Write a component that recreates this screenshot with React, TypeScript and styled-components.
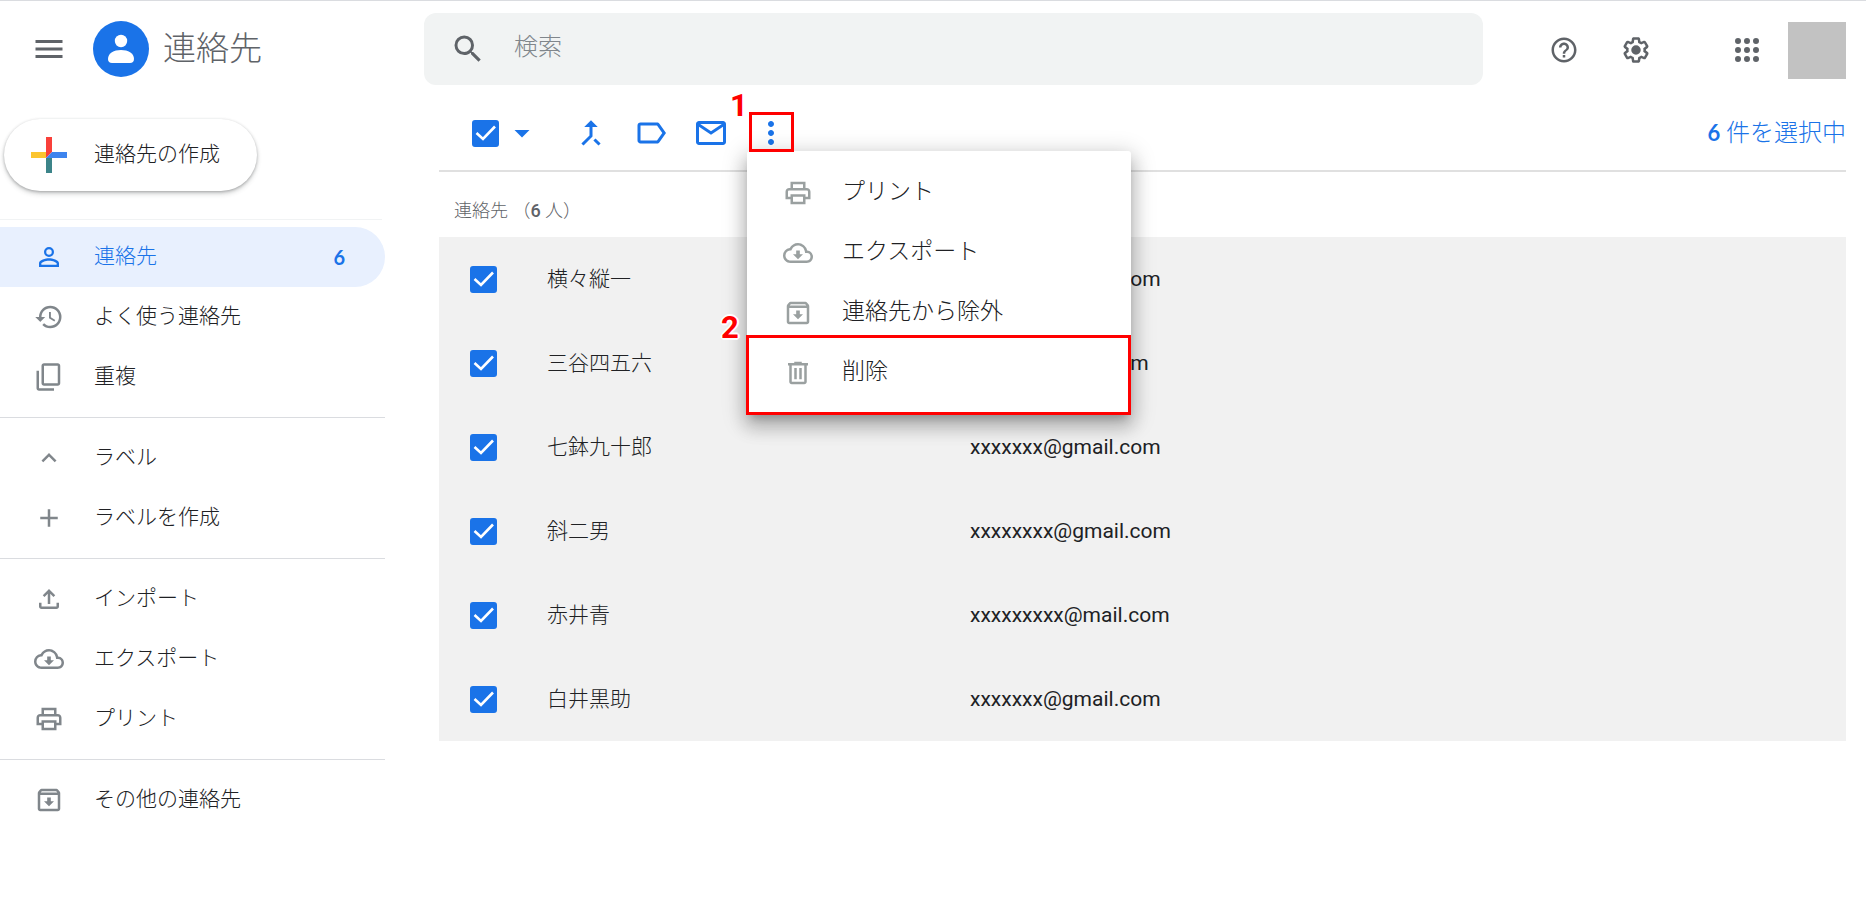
import React from 'react';
import styled, { createGlobalStyle } from 'styled-components';

const BLUE = '#1a73e8';
const GREY = '#5f6368';
const RED = '#ff0000';
const JP = "'Noto Sans CJK JP', sans-serif";

const GlobalStyle = createGlobalStyle`
  *, *::before, *::after { box-sizing: border-box; }
  body {
    margin: 0;
    background: #fff;
    color: #202124;
    font-family: Roboto, ${JP};
    font-size: 21px;
    font-weight: 300;
    line-height: 30px;
  }
  button, input { font: inherit; color: inherit; }
  button { border: 0; padding: 0; background: none; cursor: pointer; }
  ul { list-style: none; margin: 0; padding: 0; }
  a { color: inherit; text-decoration: none; }
`;

const PATHS = {
  menu: 'M3 18h18v-2H3v2zm0-5h18v-2H3v2zm0-7v2h18V6H3z',
  search:
    'M15.5 14h-.79l-.28-.27A6.471 6.471 0 0 0 16 9.5 6.5 6.5 0 1 0 9.5 16c1.61 0 3.09-.59 4.23-1.57l.27.28v.79l5 4.99L20.49 19l-4.99-5zm-6 0C7.01 14 5 11.99 5 9.5S7.01 5 9.5 5 14 7.01 14 9.5 11.99 14 9.5 14z',
  help:
    'M11 18h2v-2h-2v2zm1-16C6.48 2 2 6.48 2 12s4.48 10 10 10 10-4.48 10-10S17.52 2 12 2zm0 18c-4.41 0-8-3.59-8-8s3.59-8 8-8 8 3.59 8 8-3.59 8-8 8zm0-14c-2.21 0-4 1.79-4 4h2c0-1.1.9-2 2-2s2 .9 2 2c0 2-3 1.75-3 5h2c0-2.25 3-2.5 3-5 0-2.21-1.79-4-4-4z',
  settings:
    'M13.85 22.25h-3.7c-.74 0-1.36-.54-1.45-1.27l-.27-1.89c-.27-.14-.53-.29-.79-.46l-1.8.72c-.7.26-1.47-.03-1.81-.65L2.2 15.53c-.35-.66-.2-1.44.36-1.88l1.53-1.19c-.01-.15-.02-.3-.02-.46 0-.15.01-.31.02-.46l-1.52-1.19c-.59-.45-.74-1.26-.37-1.88l1.85-3.19c.34-.62 1.11-.9 1.79-.63l1.81.73c.26-.17.52-.32.78-.46l.27-1.91c.09-.7.71-1.25 1.44-1.25h3.7c.74 0 1.36.54 1.45 1.27l.27 1.89c.27.14.53.29.79.46l1.8-.72c.71-.26 1.48.03 1.82.65l1.84 3.18c.36.66.2 1.44-.36 1.88l-1.52 1.19c.01.15.02.3.02.46s-.01.31-.02.46l1.52 1.19c.56.45.72 1.23.37 1.86l-1.86 3.22c-.34.62-1.11.9-1.8.63l-1.8-.72c-.26.17-.52.32-.78.46l-.27 1.91c-.1.68-.72 1.22-1.46 1.22zm-3.23-2h2.76l.37-2.55.53-.22c.44-.18.88-.44 1.34-.78l.45-.34 2.38.96 1.38-2.4-2.03-1.58.07-.56c.03-.26.06-.51.06-.78s-.03-.53-.06-.78l-.07-.56 2.03-1.58-1.39-2.4-2.39.96-.45-.35c-.42-.32-.87-.58-1.33-.77l-.52-.22-.37-2.55h-2.76l-.37 2.55-.53.21c-.44.19-.88.44-1.34.79l-.45.33-2.38-.95-1.39 2.39 2.03 1.58-.07.56a7 7 0 0 0-.06.79c0 .26.02.53.06.78l.07.56-2.03 1.58 1.38 2.4 2.39-.96.45.35c.43.33.86.58 1.33.77l.53.22.38 2.55zM12 8.2a3.8 3.8 0 1 0 0 7.6 3.8 3.8 0 0 0 0-7.6z',
  apps:
    'M6 4a2 2 0 1 0 0 4 2 2 0 0 0 0-4zm6 0a2 2 0 1 0 0 4 2 2 0 0 0 0-4zm6 0a2 2 0 1 0 0 4 2 2 0 0 0 0-4zM6 10a2 2 0 1 0 0 4 2 2 0 0 0 0-4zm6 0a2 2 0 1 0 0 4 2 2 0 0 0 0-4zm6 0a2 2 0 1 0 0 4 2 2 0 0 0 0-4zM6 16a2 2 0 1 0 0 4 2 2 0 0 0 0-4zm6 0a2 2 0 1 0 0 4 2 2 0 0 0 0-4zm6 0a2 2 0 1 0 0 4 2 2 0 0 0 0-4z',
  person:
    'M12 4a4 4 0 1 0 0 8 4 4 0 0 0 0-8zm0 1.8a2.2 2.2 0 1 1 0 4.4 2.2 2.2 0 0 1 0-4.4zM12 13c-2.67 0-8 1.34-8 4v3h16v-3c0-2.66-5.33-4-8-4zm6.1 5.2H5.9V17c0-.64 3.13-2.1 6.1-2.1s6.1 1.46 6.1 2.1v1.2z',
  history:
    'M13 3a9 9 0 0 0-9 9H1l3.89 3.89.07.14L9 12H6c0-3.87 3.13-7 7-7s7 3.13 7 7-3.13 7-7 7c-1.93 0-3.68-.79-4.94-2.06l-1.42 1.42A8.954 8.954 0 0 0 13 21a9 9 0 0 0 0-18zm-1 5v5l4.28 2.54.72-1.21-3.5-2.08V8H12z',
  copy:
    'M16 23H4c-1.1 0-2-.9-2-2V7h2v14h12v2zm3-4H8c-1.1 0-2-.9-2-2V3c0-1.1.9-2 2-2h11c1.1 0 2 .9 2 2v14c0 1.1-.9 2-2 2zm0-16H8v14h11V3z',
  chevron: 'M12 8l-6 6 1.41 1.41L12 10.83l4.59 4.58L18 14z',
  add: 'M19 13h-6v6h-2v-6H5v-2h6V5h2v6h6v2z',
  upload:
    'M4 15v3c0 1.1.9 2 2 2h12c1.1 0 2-.9 2-2v-3h-2v3H6v-3H4zm3-6l1.41 1.41L11 7.83V16h2V7.83l2.59 2.58L17 9l-5-5-5 5z',
  cloud:
    'M19.35 10.04A7.49 7.49 0 0 0 12 4C9.11 4 6.6 5.64 5.35 8.04A5.994 5.994 0 0 0 0 14c0 3.31 2.69 6 6 6h13c2.76 0 5-2.24 5-5 0-2.64-2.05-4.78-4.65-4.96zM19 18H6c-2.21 0-4-1.79-4-4 0-2.05 1.53-3.76 3.56-3.97l1.07-.11.5-.95A5.469 5.469 0 0 1 12 6c2.62 0 4.88 1.86 5.39 4.43l.3 1.5 1.53.11A2.98 2.98 0 0 1 22 15c0 1.65-1.35 3-3 3zm-5.55-8h-2.9v3H8l4 4 4-4h-2.55v-3z',
  print:
    'M19 8h-1V3H6v5H5c-1.66 0-3 1.34-3 3v6h4v4h12v-4h4v-6c0-1.66-1.34-3-3-3zM8 5h8v3H8V5zm8 12v2H8v-4h8v2zm2-2v-2H6v2H4v-4c0-.55.45-1 1-1h14c.55 0 1 .45 1 1v4h-2z',
  archive:
    'M20.54 5.23l-1.39-1.68A1.45 1.45 0 0 0 18 3H6c-.47 0-.88.21-1.16.55L3.46 5.23C3.17 5.57 3 6.02 3 6.5V19c0 1.1.9 2 2 2h14c1.1 0 2-.9 2-2V6.5c0-.48-.17-.93-.46-1.27zM6.24 5h11.52l.83 1H5.42l.82-1zM5 19V8h14v11H5zm8.45-9h-2.9v3H8l4 4 4-4h-2.55v-3z',
  trash:
    'M15 4V3H9v1H4v2h1v13c0 1.1.9 2 2 2h10c1.1 0 2-.9 2-2V6h1V4h-5zm2 15H7V6h10v13zM9 8h2v9H9V8zm4 0h2v9h-2V8z',
  dropdown: 'M7 10l5 5 5-5z',
  merge:
    'M17 20.41L18.41 19 15 15.59 13.59 17 17 20.41zM7.5 8H11v5.59L5.59 19 7 20.41l6-6V8h3.5L12 3.5 7.5 8z',
  label:
    'M17.63 5.84C17.27 5.33 16.67 5 16 5L5 5.01C3.9 5.01 3 5.9 3 7v10c0 1.1.9 1.99 2 1.99L16 19c.67 0 1.27-.33 1.63-.84L22 12l-4.37-6.16zM16 17H5V7h11l3.55 5L16 17z',
  mail:
    'M20 4H4c-1.1 0-2 .9-2 2v12c0 1.1.9 2 2 2h16c1.1 0 2-.9 2-2V6c0-1.1-.9-2-2-2zm-.8 2L12 10.9 4.8 6h14.4zM4 18V7.9l8 5.2 8-5.2V18H4z',
  more:
    'M12 8c1.1 0 2-.9 2-2s-.9-2-2-2-2 .9-2 2 .9 2 2 2zm0 2c-1.1 0-2 .9-2 2s.9 2 2 2 2-.9 2-2-.9-2-2-2zm0 6c-1.1 0-2 .9-2 2s.9 2 2 2 2-.9 2-2-.9-2-2-2z',
};

type IconName = keyof typeof PATHS;

const Svg = styled.svg`
  display: block;
  flex: none;
  fill: currentColor;
`;

const Icon = ({ name, size = 30 }: { name: IconName; size?: number }) => (
  <Svg width={size} height={size} viewBox="0 0 24 24" aria-hidden="true">
    <path fillRule="evenodd" d={PATHS[name]} />
  </Svg>
);

const Page = styled.div`
  border-top: 1px solid #dadce0;
`;

/* ---------- header ---------- */

const Header = styled.header`
  display: flex;
  align-items: center;
  padding: 12px 20px 12px 0;
`;

const Brand = styled.div`
  display: flex;
  align-items: center;
  flex: none;
  width: 424px;
  padding-left: 31px;
  color: ${GREY};
`;

const IconButton = styled.button<{ $color?: string }>`
  display: grid;
  place-items: center;
  flex: none;
  width: 36px;
  height: 36px;
  color: ${(p) => p.$color ?? GREY};
`;

const BrandLink = styled.a`
  display: flex;
  align-items: center;
  gap: 14px;
  margin-left: 26px;
  font-size: 33px;
  line-height: 48px;
`;

const SearchBox = styled.label`
  display: flex;
  align-items: center;
  flex: 1;
  min-width: 0;
  height: 72px;
  gap: 28px;
  padding: 0 26px;
  border-radius: 12px;
  background: #f1f3f3;
  color: ${GREY};
`;

const SearchInput = styled.input`
  flex: 1;
  min-width: 0;
  padding: 0 0 4px;
  border: 0;
  outline: 0;
  background: none;
  font-size: 24px;
  line-height: 36px;
  &::placeholder { color: #80868b; opacity: 1; }
`;

const HeaderActions = styled.div`
  display: flex;
  align-items: center;
  justify-content: flex-end;
  flex: none;
  width: 363px;
  gap: 36px;
  padding-top: 2px;
`;

const AppsGroup = styled.div`
  display: flex;
  align-items: center;
  gap: 23px;
  margin-left: 39px;
`;

const Avatar = styled.button`
  width: 58px;
  height: 57px;
  background: #c2c2c2;
`;

/* ---------- side bar ---------- */

const Body = styled.div`
  display: flex;
  align-items: flex-start;
`;

const Sidebar = styled.nav`
  flex: none;
  width: 385px;
  padding-top: 22px;
`;

const CreateButton = styled.button`
  display: flex;
  align-items: center;
  gap: 27px;
  width: 253px;
  height: 72px;
  margin: 0 0 28px 4px;
  padding-left: 27px;
  border-radius: 36px;
  background: #fff;
  color: #202124;
  box-shadow: 0 1px 3px rgba(60, 64, 67, 0.35), 0 3px 5px rgba(60, 64, 67, 0.2);
`;

const Divider = styled.hr<{ $faint?: boolean }>`
  height: 1px;
  margin: ${(p) => (p.$faint ? '0 3px 7px 0' : '10px 0')};
  border: 0;
  background: ${(p) => (p.$faint ? '#f1f3f4' : '#dadce0')};
`;

const NavLink = styled.a<{ $active?: boolean }>`
  display: flex;
  align-items: center;
  height: 60px;
  gap: 30px;
  padding: 0 40px 1px 34px;
  border-radius: 0 30px 30px 0;
  background: ${(p) => (p.$active ? '#e8f0fe' : 'transparent')};
  color: ${(p) => (p.$active ? BLUE : '#202124')};
  & > svg { color: ${(p) => (p.$active ? BLUE : '#80868b')}; }
`;

const Count = styled.span`
  margin-left: auto;
  font-family: Lato, sans-serif;
  font-size: 20px;
  font-weight: 700;
`;

/* ---------- main ---------- */

const Main = styled.main`
  flex: 1;
  min-width: 0;
  padding: 0 20px 0 54px;
`;

const Toolbar = styled.div`
  display: flex;
  align-items: center;
  height: 75px;
  padding: 0 0 1px 33px;
  border-bottom: 2px solid #e0e0e0;
`;

const ToolGroup = styled.div`
  display: flex;
  gap: 24px;
  margin-left: 33px;
`;

const SelectToggle = styled.button`
  margin-left: 5px;
  color: ${BLUE};
`;

const CheckWrap = styled.span`
  display: grid;
  width: 27px;
  & > * { grid-area: 1 / 1; }
  & > svg { pointer-events: none; }
`;

const CheckInput = styled.input`
  appearance: none;
  width: 27px;
  height: 27px;
  margin: 0;
  border: 2px solid ${GREY};
  border-radius: 3px;
  &:checked { border-color: ${BLUE}; background: ${BLUE}; }
`;

const Checkbox = ({ label }: { label: string }) => (
  <CheckWrap>
    <CheckInput type="checkbox" defaultChecked aria-label={label} />
    <Svg width="27" height="27" viewBox="0 0 27 27" aria-hidden="true">
      <path d="M4.500 13l6.500 6L23 6.500" fill="none" stroke="#fff" strokeWidth="2.6" />
    </Svg>
  </CheckWrap>
);

const Selected = styled.p`
  margin: 0 0 0 auto;
  color: ${BLUE};
  font-size: 24px;
`;

const SelectedNumber = styled.span`
  font-family: Lato, sans-serif;
  font-size: 22px;
  font-weight: 700;
`;

const MenuAnchor = styled.div`
  position: relative;
`;

const Callout = styled.span<{ $left: number; $top: number }>`
  position: absolute;
  left: ${(p) => p.$left}px;
  top: ${(p) => p.$top}px;
  color: ${RED};
  font: 700 31px/32px Roboto, sans-serif;
  text-shadow: 2px 0 #fff, -2px 0 #fff, 0 2px #fff, 0 -2px #fff, 1px 1px #fff, -1px -1px #fff, 1px -1px #fff, -1px 1px #fff;
`;

const ButtonFrame = styled.span`
  position: absolute;
  left: -4px;
  top: -3px;
  z-index: 3;
  width: 45px;
  height: 40px;
  border: 3px solid ${RED};
  pointer-events: none;
`;

const Menu = styled.ul`
  position: absolute;
  left: -6px;
  top: 36px;
  z-index: 2;
  width: 384px;
  padding: 12px 0;
  border-radius: 3px;
  background: #fff;
  box-shadow: 0 7px 8px -4px rgba(0, 0, 0, 0.2), 0 12px 17px 2px rgba(0, 0, 0, 0.14),
    0 5px 22px 4px rgba(0, 0, 0, 0.18);
`;

const MenuFrame = styled.li`
  position: absolute;
  left: -1px;
  right: 0;
  bottom: 0;
  height: 80px;
  border: 3px solid ${RED};
  pointer-events: none;
`;

const MenuItem = styled.button`
  display: flex;
  align-items: center;
  gap: 29px;
  width: 100%;
  height: 60px;
  padding-left: 36px;
  color: #202124;
  font-size: 23px;
  & > svg { color: #9aa0a0; }
`;

const Label = styled.span`
  padding-bottom: 2px;
`;

const ListTitle = styled.h2`
  margin: 0;
  padding: 24px 15px 11px;
  color: ${GREY};
  font-size: 18px;
  font-weight: 300;
  line-height: 30px;
`;

const Digit = styled.span`
  font-weight: 500;
`;

const Table = styled.table`
  width: 100%;
  border-collapse: collapse;
  table-layout: fixed;
  background: #f1f1f1;
`;

const Cell = styled.td<{ $width?: number }>`
  width: ${(p) => (p.$width ? `${p.$width}px` : 'auto')};
  height: 84px;
  padding: 0;
  vertical-align: middle;
`;

const CheckCell = styled(Cell)`
  padding-left: 31px;
`;

const MailCell = styled(Cell)`
  font-weight: 400;
`;

const contacts = [
  ['横々縦一', 'xxxxxxx@gmail.com'],
  ['三谷四五六', 'xxxxxxx@mail.com'],
  ['七鉢九十郎', 'xxxxxxx@gmail.com'],
  ['斜二男', 'xxxxxxxx@gmail.com'],
  ['赤井青', 'xxxxxxxxx@mail.com'],
  ['白井黒助', 'xxxxxxx@gmail.com'],
];

const navGroups: { icon: IconName; text: string; count?: number }[][] = [
  [
    { icon: 'person', text: '連絡先', count: 6 },
    { icon: 'history', text: 'よく使う連絡先' },
    { icon: 'copy', text: '重複' },
  ],
  [
    { icon: 'chevron', text: 'ラベル' },
    { icon: 'add', text: 'ラベルを作成' },
  ],
  [
    { icon: 'upload', text: 'インポート' },
    { icon: 'cloud', text: 'エクスポート' },
    { icon: 'print', text: 'プリント' },
  ],
  [{ icon: 'archive', text: 'その他の連絡先' }],
];

const menuItems: { icon: IconName; text: string }[] = [
  { icon: 'print', text: 'プリント' },
  { icon: 'cloud', text: 'エクスポート' },
  { icon: 'archive', text: '連絡先から除外' },
  { icon: 'trash', text: '削除' },
];

const Logo = () => (
  <Svg width="56" height="56" viewBox="0 0 56 56" aria-hidden="true">
    <circle cx="28" cy="28" r="28" fill={BLUE} />
    <circle cx="28" cy="20" r="6.2" fill="#fff" />
    <path d="M15 38c0-6 6-9 13-9s13 3 13 9c0 2.500-1.500 4-4 4H19c-2.500 0-4-1.500-4-4z" fill="#fff" />
  </Svg>
);

const ColorPlus = () => (
  <Svg width="36" height="36" viewBox="0 0 36 36" aria-hidden="true">
    <path d="M15 0h6v15l-6 6z" fill="#f9403a" />
    <path d="M0 15h15v6H0z" fill="#fbc530" />
    <path d="M15 21h6v15h-6z" fill="#3c8489" />
    <path d="M21 15h15v6H15z" fill="#3d84ee" />
  </Svg>
);

export default function App() {
  return (
    <Page>
      <GlobalStyle />
      <Header>
        <Brand>
          <IconButton aria-label="メインメニュー">
            <Icon name="menu" size={36} />
          </IconButton>
          <BrandLink href="#contacts">
            <Logo />
            連絡先
          </BrandLink>
        </Brand>
        <SearchBox>
          <Icon name="search" size={36} />
          <SearchInput type="text" placeholder="検索" aria-label="検索" />
        </SearchBox>
        <HeaderActions>
          <IconButton aria-label="ヘルプ">
            <Icon name="help" />
          </IconButton>
          <IconButton aria-label="設定">
            <Icon name="settings" />
          </IconButton>
          <AppsGroup>
            <IconButton aria-label="アプリ">
              <Icon name="apps" size={36} />
            </IconButton>
            <Avatar aria-label="アカウント" />
          </AppsGroup>
        </HeaderActions>
      </Header>

      <Body>
        <Sidebar>
          <CreateButton>
            <ColorPlus />
            <Label>連絡先の作成</Label>
          </CreateButton>
          <Divider $faint />
          {navGroups.map((group, i) => (
            <React.Fragment key={i}>
              {i > 0 && <Divider />}
              {group.map((item) => (
                <NavLink key={item.text} href="#" $active={item.count !== undefined}>
                  <Icon name={item.icon} />
                  <Label>{item.text}</Label>
                  {item.count !== undefined && <Count>{item.count}</Count>}
                </NavLink>
              ))}
            </React.Fragment>
          ))}
        </Sidebar>

        <Main>
          <Toolbar>
            <Checkbox label="すべて選択" />
            <SelectToggle aria-label="選択方法">
              <Icon name="dropdown" size={36} />
            </SelectToggle>
            <ToolGroup>
              <IconButton $color={BLUE} aria-label="統合">
                <Icon name="merge" size={36} />
              </IconButton>
              <IconButton $color={BLUE} aria-label="ラベルを管理">
                <Icon name="label" size={36} />
              </IconButton>
              <IconButton $color={BLUE} aria-label="メールを送信">
                <Icon name="mail" size={36} />
              </IconButton>
              <MenuAnchor>
                <IconButton $color={BLUE} aria-label="その他の操作" aria-expanded="true">
                  <Icon name="more" size={36} />
                </IconButton>
                <Callout $left={-23} $top={-25}>1</Callout>
                <ButtonFrame />
                <Menu>
                  {menuItems.map((item) => (
                    <li key={item.text}>
                      <MenuItem>
                        <Icon name={item.icon} />
                        <Label>{item.text}</Label>
                      </MenuItem>
                    </li>
                  ))}
                  <MenuFrame aria-hidden="true">
                    <Callout $left={-28} $top={-26}>2</Callout>
                  </MenuFrame>
                </Menu>
              </MenuAnchor>
            </ToolGroup>
            <Selected>
              <SelectedNumber>6</SelectedNumber> 件を選択中
            </Selected>
          </Toolbar>

          <ListTitle>
            連絡先 （<Digit>6</Digit> 人）
          </ListTitle>
          <Table aria-label="連絡先">
            <tbody>
              {contacts.map(([name, mail]) => (
                <tr key={name}>
                  <CheckCell $width={108}>
                    <Checkbox label={name} />
                  </CheckCell>
                  <Cell $width={423}>
                    <Label>{name}</Label>
                  </Cell>
                  <MailCell>{mail}</MailCell>
                </tr>
              ))}
            </tbody>
          </Table>
        </Main>
      </Body>
    </Page>
  );
}
